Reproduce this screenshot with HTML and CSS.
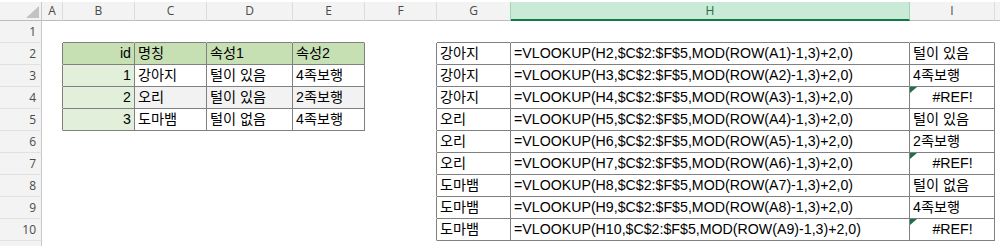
FILE: index.html
```html
<!DOCTYPE html>
<html lang="ko">
<head>
<meta charset="utf-8">
<title>Sheet</title>
<link rel="stylesheet" href="styles.css">
</head>
<body>
<div class="sheet">
  <!-- column headers -->
  <div class="c ch corner"><svg class="corner-tri" width="13" height="12" viewBox="0 0 13 12"><polygon points="13,0 13,12 0,12" fill="#c3c3c3"/></svg></div>
  <div class="c ch">A</div>
  <div class="c ch">B</div>
  <div class="c ch">C</div>
  <div class="c ch">D</div>
  <div class="c ch">E</div>
  <div class="c ch">F</div>
  <div class="c ch ch-pre">G</div>
  <div class="c ch ch-sel">H</div>
  <div class="c ch">I</div>
  <div class="c ch ch-last"></div>

  <!-- row 1 -->
  <div class="c rh">1</div>
  <div class="c"></div>
  <div class="c tt"></div><div class="c tt"></div><div class="c tt"></div><div class="c tt"></div>
  <div class="c"></div>
  <div class="c tt"></div><div class="c tt"></div><div class="c tt"></div>
  <div class="c"></div>

  <!-- row 2 -->
  <div class="c rh">2</div>
  <div class="c tl"></div>
  <div class="c t hd r">id</div>
  <div class="c t hd">명칭</div>
  <div class="c t hd">속성1</div>
  <div class="c t hd">속성2</div>
  <div class="c tl"></div>
  <div class="c t">강아지</div>
  <div class="c t">=VLOOKUP(H2,$C$2:$F$5,MOD(ROW(A1)-1,3)+2,0)</div>
  <div class="c t">털이 있음</div>
  <div class="c"></div>

  <!-- row 3 -->
  <div class="c rh">3</div>
  <div class="c tl"></div>
  <div class="c t idc r">1</div>
  <div class="c t">강아지</div>
  <div class="c t">털이 있음</div>
  <div class="c t">4족보행</div>
  <div class="c tl"></div>
  <div class="c t">강아지</div>
  <div class="c t">=VLOOKUP(H3,$C$2:$F$5,MOD(ROW(A2)-1,3)+2,0)</div>
  <div class="c t">4족보행</div>
  <div class="c"></div>

  <!-- row 4 -->
  <div class="c rh">4</div>
  <div class="c tl"></div>
  <div class="c t idc r">2</div>
  <div class="c t alt">오리</div>
  <div class="c t alt">털이 있음</div>
  <div class="c t alt">2족보행</div>
  <div class="c tl"></div>
  <div class="c t">강아지</div>
  <div class="c t">=VLOOKUP(H4,$C$2:$F$5,MOD(ROW(A3)-1,3)+2,0)</div>
  <div class="c t err">#REF!</div>
  <div class="c"></div>

  <!-- row 5 -->
  <div class="c rh">5</div>
  <div class="c tl"></div>
  <div class="c t idc r">3</div>
  <div class="c t">도마뱀</div>
  <div class="c t">털이 없음</div>
  <div class="c t">4족보행</div>
  <div class="c tl"></div>
  <div class="c t">오리</div>
  <div class="c t">=VLOOKUP(H5,$C$2:$F$5,MOD(ROW(A4)-1,3)+2,0)</div>
  <div class="c t">털이 있음</div>
  <div class="c"></div>

  <!-- row 6 -->
  <div class="c rh">6</div>
  <div class="c"></div><div class="c"></div><div class="c"></div><div class="c"></div><div class="c"></div>
  <div class="c tl"></div>
  <div class="c t">오리</div>
  <div class="c t">=VLOOKUP(H6,$C$2:$F$5,MOD(ROW(A5)-1,3)+2,0)</div>
  <div class="c t">2족보행</div>
  <div class="c"></div>

  <!-- row 7 -->
  <div class="c rh">7</div>
  <div class="c"></div><div class="c"></div><div class="c"></div><div class="c"></div><div class="c"></div>
  <div class="c tl"></div>
  <div class="c t">오리</div>
  <div class="c t">=VLOOKUP(H7,$C$2:$F$5,MOD(ROW(A6)-1,3)+2,0)</div>
  <div class="c t err">#REF!</div>
  <div class="c"></div>

  <!-- row 8 -->
  <div class="c rh">8</div>
  <div class="c"></div><div class="c"></div><div class="c"></div><div class="c"></div><div class="c"></div>
  <div class="c tl"></div>
  <div class="c t">도마뱀</div>
  <div class="c t">=VLOOKUP(H8,$C$2:$F$5,MOD(ROW(A7)-1,3)+2,0)</div>
  <div class="c t">털이 없음</div>
  <div class="c"></div>

  <!-- row 9 -->
  <div class="c rh">9</div>
  <div class="c"></div><div class="c"></div><div class="c"></div><div class="c"></div><div class="c"></div>
  <div class="c tl"></div>
  <div class="c t">도마뱀</div>
  <div class="c t">=VLOOKUP(H9,$C$2:$F$5,MOD(ROW(A8)-1,3)+2,0)</div>
  <div class="c t">4족보행</div>
  <div class="c"></div>

  <!-- row 10 -->
  <div class="c rh">10</div>
  <div class="c"></div><div class="c"></div><div class="c"></div><div class="c"></div><div class="c"></div>
  <div class="c tl"></div>
  <div class="c t">도마뱀</div>
  <div class="c t">=VLOOKUP(H10,$C$2:$F$5,MOD(ROW(A9)-1,3)+2,0)</div>
  <div class="c t err">#REF!</div>
  <div class="c"></div>

  <!-- row 11 (partially visible) -->
  <div class="c rh"></div>
  <div class="c"></div><div class="c"></div><div class="c"></div><div class="c"></div><div class="c"></div>
  <div class="c"></div><div class="c"></div><div class="c"></div><div class="c"></div><div class="c"></div>
</div>
</body>
</html>
```
FILE: styles.css
```css
html, body {
  margin: 0;
  padding: 0;
  background: #ffffff;
}
body {
  overflow: hidden;
}
.sheet {
  display: grid;
  grid-template-columns: 42px 21px 72px 72px 86px 72px 72px 74px 399px 85px 1fr;
  grid-template-rows: 19px;
  grid-auto-rows: 22px;
  margin-top: 2px;
  font-family: "Liberation Sans", "Noto Sans CJK KR", sans-serif;
  font-size: 14.2px;
  color: #000;
}
.c {
  box-sizing: border-box;
  border-right: 1px solid transparent;
  border-bottom: 1px solid transparent;
  line-height: 21px;
  padding: 0 2px 0 3px;
  white-space: nowrap;
  overflow: hidden;
  min-width: 0;
}
.r { text-align: right; padding-right: 3px; }

/* column headers */
.ch {
  background: #f3f3f3;
  border-right-color: #dcdcdc;
  border-bottom-color: #bcbcbc;
  font-family: "Open Sans", "Liberation Sans", sans-serif;
  font-size: 12px;
  line-height: 18px;
  color: #4a4a4a;
  text-align: center;
  padding: 0;
}
.corner {
  display: flex;
  justify-content: flex-end;
  align-items: flex-end;
  padding: 0 2px 2px 0;
  border-right-color: #c8c8c8;
}
.corner-tri { display: block; }
.ch-pre { border-right-color: #9fd5b7; }
.ch-sel {
  background: #caead8;
  color: #1d6b45;
  border-right-color: #9fd5b7;
  border-bottom: 2px solid #107c41;
  line-height: 17px;
}
.ch-last { border-right-color: transparent; }

/* row headers */
.rh {
  background: #f3f3f3;
  border-right-color: #c8c8c8;
  border-bottom-color: #e1e1e1;
  font-family: "Open Sans", "Liberation Sans", sans-serif;
  font-size: 12px;
  line-height: 22px;
  color: #4a4a4a;
  text-align: right;
  padding: 0 5px 0 0;
}

/* table borders */
.t {
  border-right-color: #808080;
  border-bottom-color: #808080;
}
.tt { border-bottom-color: #808080; }
.tl { border-right-color: #808080; }
.hd { background: #c6e0b4; }
.idc { background: #e2efda; }
.alt { background: #f2f2f2; }

.err {
  position: relative;
  text-align: center;
}
.err::before {
  content: "";
  position: absolute;
  top: 0;
  left: 0;
  width: 0;
  height: 0;
  border-top: 6px solid #1e7145;
  border-right: 7px solid transparent;
}
```
